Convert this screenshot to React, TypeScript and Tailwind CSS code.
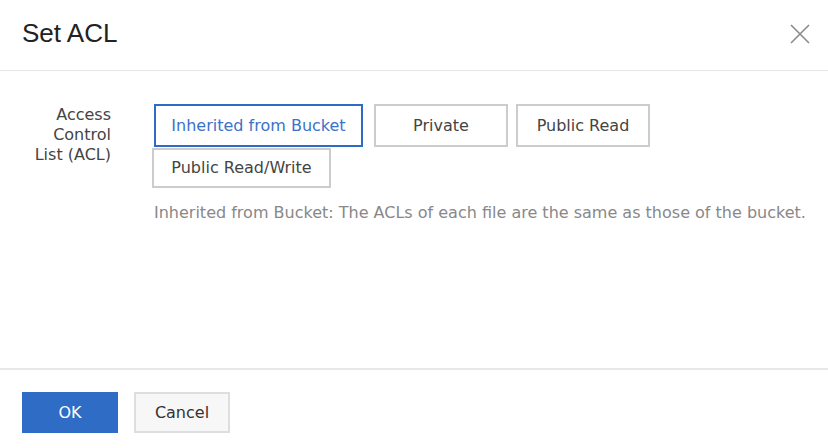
import React, { useState } from 'react';

const FONT = '"DejaVu Sans", "Noto Sans", sans-serif';

type AclOption = {
	key: string;
	label: string;
	width: string;
	row: 1 | 2;
	tip: string;
};

const OPTIONS: AclOption[] = [
	{
		key: 'inherit',
		label: 'Inherited from Bucket',
		width: 'w-[209px]',
		row: 1,
		tip: 'Inherited from Bucket: The ACLs of each file are the same as those of the bucket.',
	},
	{ key: 'private', label: 'Private', width: 'w-[134px]', row: 1, tip: '' },
	{ key: 'read', label: 'Public Read', width: 'w-[134px]', row: 1, tip: '' },
	{ key: 'rw', label: 'Public Read/Write', width: 'w-[179px]', row: 2, tip: '' },
];

const CloseIcon = () => (
	<svg width="20" height="20" viewBox="0 0 20 20" fill="none" stroke="#8a8a8a" strokeWidth="1.6">
		<path d="M1 1 L19 19 M19 1 L1 19" />
	</svg>
);

export default function App() {
	const [selected, setSelected] = useState('inherit');
	const current = OPTIONS.find((o) => o.key === selected);

	return (
		<div
			className="w-[828px] h-[448px] bg-white flex flex-col text-[#333]"
			style={{ fontFamily: FONT }}
		>
			{/* header */}
			<div className="h-[71px] flex items-center justify-between pl-[22px] pr-[18px] border-b border-[#e6e6e6] shrink-0">
				<h2
					className="text-[26px] leading-none text-[#222] -mt-[4px]"
					style={{ fontFamily: '"Liberation Sans", Arial, sans-serif' }}
				>
					Set ACL
				</h2>
				<button className="p-0 -mt-[2px]">
					<CloseIcon />
				</button>
			</div>

			{/* body */}
			<div className="flex-1 pt-[33px] flex">
				<div className="w-[89px] ml-[22px] text-right text-[16px] leading-[20px] text-[#444] pt-[1px]">
					Access Control List (ACL)
				</div>
				<div className="ml-[41px] flex flex-col">
					<div className="w-[560px] flex flex-wrap gap-y-[1px]">
						{OPTIONS.map((o) => {
							const active = o.key === selected;
							return (
								<button
									key={o.key}
									onClick={() => setSelected(o.key)}
									className={[
										o.width,
										o.row === 1 ? 'h-[43px]' : 'h-[40px]',
										'flex items-center justify-center border-2 text-[16px] bg-white',
										active
											? 'border-[#2d6bc5] text-[#3a73c9] ml-[2px] mr-[11px]'
											: 'border-[#cccccc] text-[#444] mr-[8px]',
									].join(' ')}
								>
									{o.label}
								</button>
							);
						})}
					</div>
					<p className="mt-[15px] ml-[2px] text-[16px] leading-[20px] text-[#888] whitespace-nowrap">
						{current?.tip ||
							'Inherited from Bucket: The ACLs of each file are the same as those of the bucket.'}
					</p>
				</div>
			</div>

			{/* footer */}
			<div className="h-[80px] shrink-0 border-t-2 border-[#e8e8e8] pt-[22px] pl-[22px] flex gap-[16px]">
				<button className="w-[96px] h-[41px] bg-[#2e6cc5] text-white text-[16px]">OK</button>
				<button className="w-[96px] h-[41px] bg-[#f7f7f7] border-2 border-[#dedede] text-[#333] text-[16px]">
					Cancel
				</button>
			</div>
		</div>
	);
}
